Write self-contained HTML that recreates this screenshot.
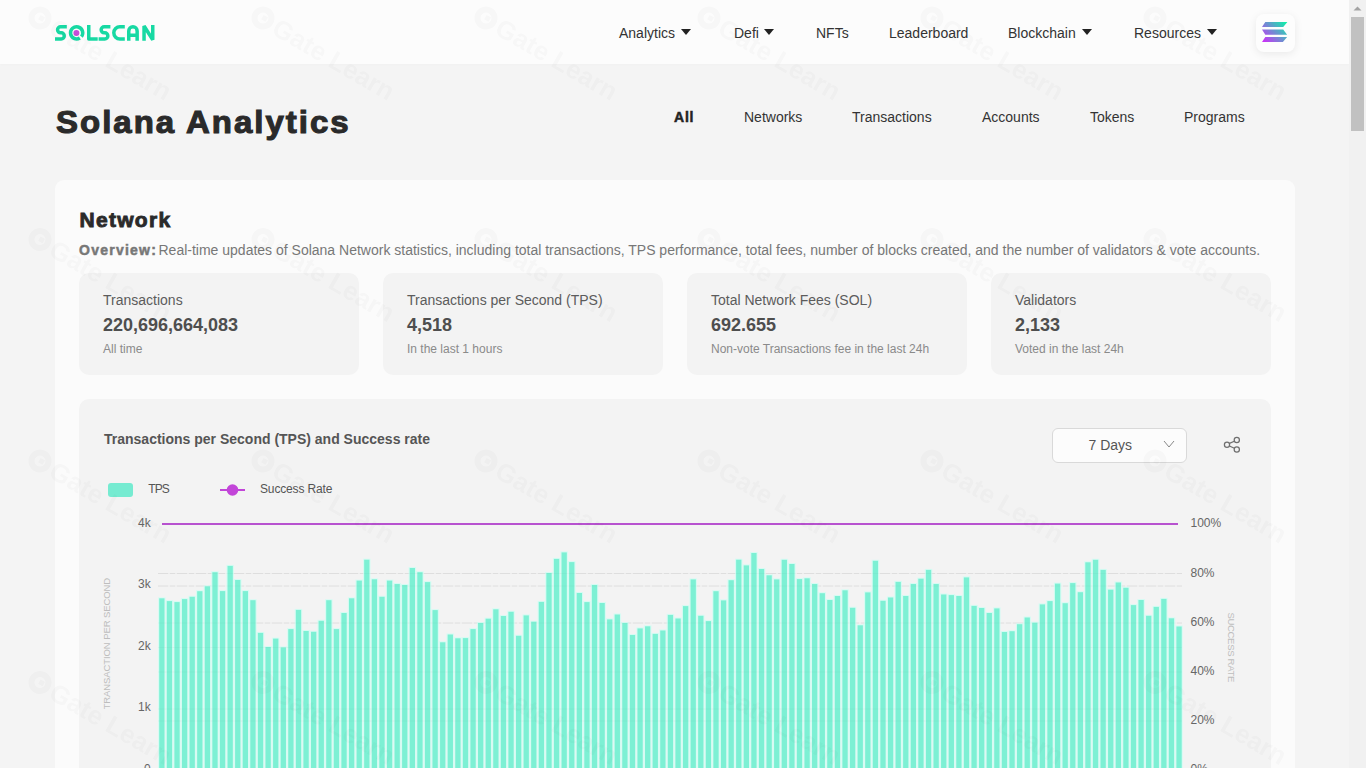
<!DOCTYPE html>
<html><head><meta charset="utf-8">
<style>
*{margin:0;padding:0;box-sizing:border-box}
html,body{width:1366px;height:768px;overflow:hidden}
body{background:#f4f4f4;font-family:"Liberation Sans",sans-serif;color:#333;position:relative}
.a{position:absolute;white-space:nowrap}
#hdr{position:absolute;left:0;top:0;width:1349px;height:64px;background:#fcfcfc;box-shadow:0 1px 2px rgba(0,0,0,0.015)}
.nav{font-size:14px;color:#333;top:25px;line-height:16px}
.caret{position:absolute;top:29px;width:0;height:0;border-left:5px solid transparent;border-right:5px solid transparent;border-top:6px solid #222}
.tab{font-size:14px;color:#333;top:109px;line-height:16px}
#card{position:absolute;left:55px;top:180px;width:1240px;height:700px;background:#fbfbfb;border-radius:9px}
.box{position:absolute;top:273px;width:280px;height:102px;background:#f3f3f3;border-radius:10px}
.lbl{font-size:14px;color:#5c5c5c;line-height:16px}
.val{font-size:18px;font-weight:bold;color:#4e4e4e;line-height:20px}
.sub{font-size:12px;color:#8a8a8a;line-height:14px}
#panel{position:absolute;left:79px;top:399px;width:1192px;height:500px;background:#f3f3f3;border-radius:10px}
#sb{position:absolute;left:1349px;top:0;width:17px;height:768px;background:#f1f1f1}
#thumb{position:absolute;left:1351px;top:17px;width:13px;height:114px;background:#c1c1c1}
</style></head><body>
<div id="hdr"></div>
<!-- logo -->
<svg class="a" style="left:0;top:0" width="170" height="64" viewBox="0 0 170 64">
<g fill="none" stroke="#17d9a3" stroke-width="3.5" stroke-linejoin="round">
<path d="M66.8 26.75H60.6A3.05 3.05 0 0 0 60.6 32.85H61.2A3.05 3.05 0 0 1 61.2 38.95H55"/>
<path d="M79.83 38.02A6.1 6.1 0 1 1 81.41 36.61"/>
<path d="M88.75 25V38.95H97.7"/>
<path d="M110.4 26.75H104.2A3.05 3.05 0 0 0 104.2 32.85H104.8A3.05 3.05 0 0 1 104.8 38.95H98.6"/>
<path d="M124.8 26.75H119.9A6.1 6.1 0 0 0 119.9 38.95H124.8"/>
<path d="M128.75 40.7V30.95A4.2 4.2 0 0 1 137.15 30.95V40.7M128.75 35.2H137.15"/>
<path d="M144.05 40.7V26L152.75 39.7V25" stroke-linejoin="miter" stroke-miterlimit="1.5"/>
</g>
<circle cx="76.4" cy="32.9" r="3" fill="#c74ed8"/>
</svg>

<div class="a nav" style="left:619px">Analytics</div><div class="caret" style="left:681px"></div>
<div class="a nav" style="left:734px">Defi</div><div class="caret" style="left:764px"></div>
<div class="a nav" style="left:816px">NFTs</div>
<div class="a nav" style="left:889px">Leaderboard</div>
<div class="a nav" style="left:1008px">Blockchain</div><div class="caret" style="left:1082px"></div>
<div class="a nav" style="left:1134px">Resources</div><div class="caret" style="left:1207px"></div>

<div class="a" style="left:1256px;top:14px;width:39px;height:38px;background:#fdfdfd;border-radius:8px;box-shadow:0 2px 8px rgba(0,0,0,0.08)"></div>
<svg class="a" style="left:0;top:0" width="1366" height="64" viewBox="0 0 1366 64">
<defs><linearGradient id="sg" x1="1287" y1="20" x2="1262" y2="44" gradientUnits="userSpaceOnUse"><stop offset="0" stop-color="#00ffa3"/><stop offset="1" stop-color="#dc1fff"/></linearGradient></defs>
<path fill="url(#sg)" d="M1265.3 22H1287.4L1283.2 27H1262Z M1262 29.5H1283.2L1287.1 34.7H1265.3Z M1265.3 37H1287.1L1282.9 42H1262Z"/>
</svg>

<div class="a" style="left:55.5px;top:101.5px;font-size:32px;font-weight:bold;color:#2a2a2a;letter-spacing:1.95px;line-height:40px;-webkit-text-stroke:1.1px #2a2a2a;transform:scaleX(1.03);transform-origin:0 0">Solana Analytics</div>

<div class="a tab" style="left:674px;font-weight:bold;color:#222;letter-spacing:0.8px;-webkit-text-stroke:0.5px #222">All</div>
<div class="a tab" style="left:744px">Networks</div>
<div class="a tab" style="left:852px">Transactions</div>
<div class="a tab" style="left:982px">Accounts</div>
<div class="a tab" style="left:1090px">Tokens</div>
<div class="a tab" style="left:1184px">Programs</div>

<div id="card"></div>
<div class="a" style="left:79.5px;top:207.8px;font-size:21px;font-weight:bold;color:#2a2a2a;letter-spacing:1.3px;line-height:24px;-webkit-text-stroke:0.9px #2a2a2a">Network</div>
<div class="a" style="left:79px;top:242px;font-size:14px;color:#777;line-height:16px"><b style="color:#777;letter-spacing:1.25px;-webkit-text-stroke:0.5px #777;margin-right:-2.6px">Overview:</b> Real-time updates of Solana Network statistics, including total transactions, TPS performance, total fees, number of blocks created, and the number of validators &amp; vote accounts.</div>

<div class="box" style="left:79px"></div>
<div class="box" style="left:383px"></div>
<div class="box" style="left:687px"></div>
<div class="box" style="left:991px"></div>

<div class="a lbl" style="left:103px;top:292px">Transactions</div>
<div class="a val" style="left:103px;top:315px">220,696,664,083</div>
<div class="a sub" style="left:103px;top:342px">All time</div>
<div class="a lbl" style="left:407px;top:292px">Transactions per Second (TPS)</div>
<div class="a val" style="left:407px;top:315px">4,518</div>
<div class="a sub" style="left:407px;top:342px">In the last 1 hours</div>
<div class="a lbl" style="left:711px;top:292px">Total Network Fees (SOL)</div>
<div class="a val" style="left:711px;top:315px">692.655</div>
<div class="a sub" style="left:711px;top:342px">Non-vote Transactions fee in the last 24h</div>
<div class="a lbl" style="left:1015px;top:292px">Validators</div>
<div class="a val" style="left:1015px;top:315px">2,133</div>
<div class="a sub" style="left:1015px;top:342px">Voted in the last 24h</div>

<div id="panel"></div>
<div class="a" style="left:104px;top:430.8px;font-size:14px;font-weight:bold;color:#555;line-height:16px">Transactions per Second (TPS) and Success rate</div>

<div class="a" style="left:1052px;top:428px;width:135px;height:35px;background:#fcfcfc;border:1px solid #d9d9d9;border-radius:6px"></div>
<div class="a" style="left:1088.5px;top:437px;font-size:14px;color:#555;line-height:16px">7 Days</div>

<svg class="a" style="left:0;top:0" width="1366" height="768" viewBox="0 0 1366 768">
<path d="M1164 441L1169 447L1174 441" fill="none" stroke="#888" stroke-width="1"/>
<g fill="none" stroke="#6f6f6f" stroke-width="1.25"><circle cx="1227" cy="444.7" r="2.6"/><circle cx="1236.8" cy="440" r="2.6"/><circle cx="1236.8" cy="449.5" r="2.6"/><path d="M1229.4 443.4L1234.4 441.2M1229.4 446L1234.4 448.3"/></g>
<rect x="108" y="483" width="25" height="14" rx="3" fill="#76ebd1"/>
<text x="148.3" y="492.9" font-size="12" fill="#555" letter-spacing="-0.9" font-family="Liberation Sans">TPS</text>
<line x1="220" x2="245" y1="490" y2="490" stroke="#c245d8" stroke-width="2"/>
<circle cx="232.5" cy="490" r="5.8" fill="#c245d8"/>
<text x="260" y="492.9" font-size="12" fill="#555" letter-spacing="-0.15" font-family="Liberation Sans">Success Rate</text>
<g stroke="#e4e4e4" stroke-width="1" stroke-dasharray="10 2 5 2">
<line x1="158" x2="1182" y1="586" y2="586"/>
<line x1="158" x2="1182" y1="647.5" y2="647.5"/>
<line x1="158" x2="1182" y1="709" y2="709"/>
<line x1="158" x2="1182" y1="573.5" y2="573.5"/>
<line x1="158" x2="1182" y1="623" y2="623"/>
<line x1="158" x2="1182" y1="672" y2="672"/>
<line x1="158" x2="1182" y1="721" y2="721"/>
</g>
<g fill="#d6fbf3">
<rect x="158.10" y="597.3" width="7.5" height="172.7"/>
<rect x="165.69" y="600.1" width="7.5" height="169.9"/>
<rect x="173.28" y="601.1" width="7.5" height="168.9"/>
<rect x="180.87" y="598.1" width="7.5" height="171.9"/>
<rect x="188.46" y="595.8" width="7.5" height="174.2"/>
<rect x="196.06" y="590.2" width="7.5" height="179.8"/>
<rect x="203.65" y="585.3" width="7.5" height="184.7"/>
<rect x="211.24" y="571.2" width="7.5" height="198.8"/>
<rect x="218.83" y="590.1" width="7.5" height="179.9"/>
<rect x="226.42" y="564.9" width="7.5" height="205.1"/>
<rect x="234.01" y="579.0" width="7.5" height="191.0"/>
<rect x="241.60" y="590.1" width="7.5" height="179.9"/>
<rect x="249.19" y="599.2" width="7.5" height="170.8"/>
<rect x="256.78" y="631.9" width="7.5" height="138.1"/>
<rect x="264.37" y="646.0" width="7.5" height="124.0"/>
<rect x="271.97" y="637.6" width="7.5" height="132.4"/>
<rect x="279.56" y="646.4" width="7.5" height="123.6"/>
<rect x="287.15" y="628.1" width="7.5" height="141.9"/>
<rect x="294.74" y="608.9" width="7.5" height="161.1"/>
<rect x="302.33" y="630.0" width="7.5" height="140.0"/>
<rect x="309.92" y="630.8" width="7.5" height="139.2"/>
<rect x="317.51" y="619.8" width="7.5" height="150.2"/>
<rect x="325.10" y="599.2" width="7.5" height="170.8"/>
<rect x="332.69" y="628.1" width="7.5" height="141.9"/>
<rect x="340.29" y="612.0" width="7.5" height="158.0"/>
<rect x="347.88" y="597.3" width="7.5" height="172.7"/>
<rect x="355.47" y="579.6" width="7.5" height="190.4"/>
<rect x="363.06" y="558.7" width="7.5" height="211.3"/>
<rect x="370.65" y="578.3" width="7.5" height="191.7"/>
<rect x="378.24" y="595.8" width="7.5" height="174.2"/>
<rect x="385.83" y="579.6" width="7.5" height="190.4"/>
<rect x="393.42" y="583.0" width="7.5" height="187.0"/>
<rect x="401.01" y="584.0" width="7.5" height="186.0"/>
<rect x="408.60" y="567.0" width="7.5" height="203.0"/>
<rect x="416.20" y="571.2" width="7.5" height="198.8"/>
<rect x="423.79" y="581.1" width="7.5" height="188.9"/>
<rect x="431.38" y="609.1" width="7.5" height="160.9"/>
<rect x="438.97" y="641.3" width="7.5" height="128.7"/>
<rect x="446.56" y="633.5" width="7.5" height="136.5"/>
<rect x="454.15" y="637.3" width="7.5" height="132.7"/>
<rect x="461.74" y="637.1" width="7.5" height="132.9"/>
<rect x="469.33" y="628.1" width="7.5" height="141.9"/>
<rect x="476.92" y="622.0" width="7.5" height="148.0"/>
<rect x="484.51" y="617.7" width="7.5" height="152.3"/>
<rect x="492.11" y="608.3" width="7.5" height="161.7"/>
<rect x="499.70" y="615.0" width="7.5" height="155.0"/>
<rect x="507.29" y="610.8" width="7.5" height="159.2"/>
<rect x="514.88" y="634.8" width="7.5" height="135.2"/>
<rect x="522.47" y="614.4" width="7.5" height="155.6"/>
<rect x="530.06" y="620.7" width="7.5" height="149.3"/>
<rect x="537.65" y="600.9" width="7.5" height="169.1"/>
<rect x="545.24" y="572.0" width="7.5" height="198.0"/>
<rect x="552.83" y="557.9" width="7.5" height="212.1"/>
<rect x="560.43" y="551.4" width="7.5" height="218.6"/>
<rect x="568.02" y="561.1" width="7.5" height="208.9"/>
<rect x="575.61" y="592.0" width="7.5" height="178.0"/>
<rect x="583.20" y="601.1" width="7.5" height="168.9"/>
<rect x="590.79" y="584.0" width="7.5" height="186.0"/>
<rect x="598.38" y="602.0" width="7.5" height="168.0"/>
<rect x="605.97" y="618.4" width="7.5" height="151.6"/>
<rect x="613.56" y="613.5" width="7.5" height="156.5"/>
<rect x="621.15" y="622.0" width="7.5" height="148.0"/>
<rect x="628.74" y="634.0" width="7.5" height="136.0"/>
<rect x="636.34" y="627.4" width="7.5" height="142.6"/>
<rect x="643.93" y="625.3" width="7.5" height="144.7"/>
<rect x="651.52" y="632.9" width="7.5" height="137.1"/>
<rect x="659.11" y="629.5" width="7.5" height="140.5"/>
<rect x="666.70" y="613.9" width="7.5" height="156.1"/>
<rect x="674.29" y="617.5" width="7.5" height="152.5"/>
<rect x="681.88" y="605.1" width="7.5" height="164.9"/>
<rect x="689.47" y="578.4" width="7.5" height="191.6"/>
<rect x="697.06" y="614.8" width="7.5" height="155.2"/>
<rect x="704.66" y="620.1" width="7.5" height="149.9"/>
<rect x="712.25" y="590.2" width="7.5" height="179.8"/>
<rect x="719.84" y="599.4" width="7.5" height="170.6"/>
<rect x="727.43" y="579.2" width="7.5" height="190.8"/>
<rect x="735.02" y="558.7" width="7.5" height="211.3"/>
<rect x="742.61" y="564.4" width="7.5" height="205.6"/>
<rect x="750.20" y="552.0" width="7.5" height="218.0"/>
<rect x="757.79" y="568.0" width="7.5" height="202.0"/>
<rect x="765.38" y="574.3" width="7.5" height="195.7"/>
<rect x="772.97" y="578.4" width="7.5" height="191.6"/>
<rect x="780.57" y="558.8" width="7.5" height="211.2"/>
<rect x="788.16" y="563.0" width="7.5" height="207.0"/>
<rect x="795.75" y="578.1" width="7.5" height="191.9"/>
<rect x="803.34" y="577.3" width="7.5" height="192.7"/>
<rect x="810.93" y="583.0" width="7.5" height="187.0"/>
<rect x="818.52" y="592.2" width="7.5" height="177.8"/>
<rect x="826.11" y="599.0" width="7.5" height="171.0"/>
<rect x="833.70" y="595.0" width="7.5" height="175.0"/>
<rect x="841.29" y="589.3" width="7.5" height="180.7"/>
<rect x="848.89" y="606.8" width="7.5" height="163.2"/>
<rect x="856.48" y="624.3" width="7.5" height="145.7"/>
<rect x="864.07" y="591.4" width="7.5" height="178.6"/>
<rect x="871.66" y="559.8" width="7.5" height="210.2"/>
<rect x="879.25" y="599.8" width="7.5" height="170.2"/>
<rect x="886.84" y="596.5" width="7.5" height="173.5"/>
<rect x="894.43" y="580.9" width="7.5" height="189.1"/>
<rect x="902.02" y="595.0" width="7.5" height="175.0"/>
<rect x="909.61" y="583.0" width="7.5" height="187.0"/>
<rect x="917.20" y="577.7" width="7.5" height="192.3"/>
<rect x="924.80" y="568.9" width="7.5" height="201.1"/>
<rect x="932.39" y="583.0" width="7.5" height="187.0"/>
<rect x="939.98" y="593.5" width="7.5" height="176.5"/>
<rect x="947.57" y="594.1" width="7.5" height="175.9"/>
<rect x="955.16" y="595.0" width="7.5" height="175.0"/>
<rect x="962.75" y="576.4" width="7.5" height="193.6"/>
<rect x="970.34" y="604.9" width="7.5" height="165.1"/>
<rect x="977.93" y="607.0" width="7.5" height="163.0"/>
<rect x="985.52" y="612.0" width="7.5" height="158.0"/>
<rect x="993.11" y="607.4" width="7.5" height="162.6"/>
<rect x="1000.71" y="631.0" width="7.5" height="139.0"/>
<rect x="1008.30" y="630.2" width="7.5" height="139.8"/>
<rect x="1015.89" y="623.2" width="7.5" height="146.8"/>
<rect x="1023.48" y="616.5" width="7.5" height="153.5"/>
<rect x="1031.07" y="621.7" width="7.5" height="148.3"/>
<rect x="1038.66" y="603.4" width="7.5" height="166.6"/>
<rect x="1046.25" y="600.1" width="7.5" height="169.9"/>
<rect x="1053.84" y="582.6" width="7.5" height="187.4"/>
<rect x="1061.43" y="602.2" width="7.5" height="167.8"/>
<rect x="1069.03" y="582.1" width="7.5" height="187.9"/>
<rect x="1076.62" y="591.2" width="7.5" height="178.8"/>
<rect x="1084.21" y="561.3" width="7.5" height="208.7"/>
<rect x="1091.80" y="558.8" width="7.5" height="211.2"/>
<rect x="1099.39" y="568.9" width="7.5" height="201.1"/>
<rect x="1106.98" y="588.7" width="7.5" height="181.3"/>
<rect x="1114.57" y="581.5" width="7.5" height="188.5"/>
<rect x="1122.16" y="586.8" width="7.5" height="183.2"/>
<rect x="1129.75" y="604.1" width="7.5" height="165.9"/>
<rect x="1137.34" y="599.0" width="7.5" height="171.0"/>
<rect x="1144.94" y="614.8" width="7.5" height="155.2"/>
<rect x="1152.53" y="605.9" width="7.5" height="164.1"/>
<rect x="1160.12" y="597.9" width="7.5" height="172.1"/>
<rect x="1167.71" y="617.3" width="7.5" height="152.7"/>
<rect x="1175.30" y="625.5" width="7.5" height="144.5"/>
</g>
<g fill="#7df0d4">
<rect x="159.20" y="598.3" width="5.3" height="171.7"/>
<rect x="166.79" y="601.1" width="5.3" height="168.9"/>
<rect x="174.38" y="602.1" width="5.3" height="167.9"/>
<rect x="181.97" y="599.1" width="5.3" height="170.9"/>
<rect x="189.56" y="596.8" width="5.3" height="173.2"/>
<rect x="197.16" y="591.2" width="5.3" height="178.8"/>
<rect x="204.75" y="586.3" width="5.3" height="183.7"/>
<rect x="212.34" y="572.2" width="5.3" height="197.8"/>
<rect x="219.93" y="591.1" width="5.3" height="178.9"/>
<rect x="227.52" y="565.9" width="5.3" height="204.1"/>
<rect x="235.11" y="580.0" width="5.3" height="190.0"/>
<rect x="242.70" y="591.1" width="5.3" height="178.9"/>
<rect x="250.29" y="600.2" width="5.3" height="169.8"/>
<rect x="257.88" y="632.9" width="5.3" height="137.1"/>
<rect x="265.47" y="647.0" width="5.3" height="123.0"/>
<rect x="273.07" y="638.6" width="5.3" height="131.4"/>
<rect x="280.66" y="647.4" width="5.3" height="122.6"/>
<rect x="288.25" y="629.1" width="5.3" height="140.9"/>
<rect x="295.84" y="609.9" width="5.3" height="160.1"/>
<rect x="303.43" y="631.0" width="5.3" height="139.0"/>
<rect x="311.02" y="631.8" width="5.3" height="138.2"/>
<rect x="318.61" y="620.8" width="5.3" height="149.2"/>
<rect x="326.20" y="600.2" width="5.3" height="169.8"/>
<rect x="333.79" y="629.1" width="5.3" height="140.9"/>
<rect x="341.39" y="613.0" width="5.3" height="157.0"/>
<rect x="348.98" y="598.3" width="5.3" height="171.7"/>
<rect x="356.57" y="580.6" width="5.3" height="189.4"/>
<rect x="364.16" y="559.7" width="5.3" height="210.3"/>
<rect x="371.75" y="579.3" width="5.3" height="190.7"/>
<rect x="379.34" y="596.8" width="5.3" height="173.2"/>
<rect x="386.93" y="580.6" width="5.3" height="189.4"/>
<rect x="394.52" y="584.0" width="5.3" height="186.0"/>
<rect x="402.11" y="585.0" width="5.3" height="185.0"/>
<rect x="409.70" y="568.0" width="5.3" height="202.0"/>
<rect x="417.30" y="572.2" width="5.3" height="197.8"/>
<rect x="424.89" y="582.1" width="5.3" height="187.9"/>
<rect x="432.48" y="610.1" width="5.3" height="159.9"/>
<rect x="440.07" y="642.3" width="5.3" height="127.7"/>
<rect x="447.66" y="634.5" width="5.3" height="135.5"/>
<rect x="455.25" y="638.3" width="5.3" height="131.7"/>
<rect x="462.84" y="638.1" width="5.3" height="131.9"/>
<rect x="470.43" y="629.1" width="5.3" height="140.9"/>
<rect x="478.02" y="623.0" width="5.3" height="147.0"/>
<rect x="485.61" y="618.7" width="5.3" height="151.3"/>
<rect x="493.21" y="609.3" width="5.3" height="160.7"/>
<rect x="500.80" y="616.0" width="5.3" height="154.0"/>
<rect x="508.39" y="611.8" width="5.3" height="158.2"/>
<rect x="515.98" y="635.8" width="5.3" height="134.2"/>
<rect x="523.57" y="615.4" width="5.3" height="154.6"/>
<rect x="531.16" y="621.7" width="5.3" height="148.3"/>
<rect x="538.75" y="601.9" width="5.3" height="168.1"/>
<rect x="546.34" y="573.0" width="5.3" height="197.0"/>
<rect x="553.93" y="558.9" width="5.3" height="211.1"/>
<rect x="561.53" y="552.4" width="5.3" height="217.6"/>
<rect x="569.12" y="562.1" width="5.3" height="207.9"/>
<rect x="576.71" y="593.0" width="5.3" height="177.0"/>
<rect x="584.30" y="602.1" width="5.3" height="167.9"/>
<rect x="591.89" y="585.0" width="5.3" height="185.0"/>
<rect x="599.48" y="603.0" width="5.3" height="167.0"/>
<rect x="607.07" y="619.4" width="5.3" height="150.6"/>
<rect x="614.66" y="614.5" width="5.3" height="155.5"/>
<rect x="622.25" y="623.0" width="5.3" height="147.0"/>
<rect x="629.84" y="635.0" width="5.3" height="135.0"/>
<rect x="637.44" y="628.4" width="5.3" height="141.6"/>
<rect x="645.03" y="626.3" width="5.3" height="143.7"/>
<rect x="652.62" y="633.9" width="5.3" height="136.1"/>
<rect x="660.21" y="630.5" width="5.3" height="139.5"/>
<rect x="667.80" y="614.9" width="5.3" height="155.1"/>
<rect x="675.39" y="618.5" width="5.3" height="151.5"/>
<rect x="682.98" y="606.1" width="5.3" height="163.9"/>
<rect x="690.57" y="579.4" width="5.3" height="190.6"/>
<rect x="698.16" y="615.8" width="5.3" height="154.2"/>
<rect x="705.76" y="621.1" width="5.3" height="148.9"/>
<rect x="713.35" y="591.2" width="5.3" height="178.8"/>
<rect x="720.94" y="600.4" width="5.3" height="169.6"/>
<rect x="728.53" y="580.2" width="5.3" height="189.8"/>
<rect x="736.12" y="559.7" width="5.3" height="210.3"/>
<rect x="743.71" y="565.4" width="5.3" height="204.6"/>
<rect x="751.30" y="553.0" width="5.3" height="217.0"/>
<rect x="758.89" y="569.0" width="5.3" height="201.0"/>
<rect x="766.48" y="575.3" width="5.3" height="194.7"/>
<rect x="774.07" y="579.4" width="5.3" height="190.6"/>
<rect x="781.67" y="559.8" width="5.3" height="210.2"/>
<rect x="789.26" y="564.0" width="5.3" height="206.0"/>
<rect x="796.85" y="579.1" width="5.3" height="190.9"/>
<rect x="804.44" y="578.3" width="5.3" height="191.7"/>
<rect x="812.03" y="584.0" width="5.3" height="186.0"/>
<rect x="819.62" y="593.2" width="5.3" height="176.8"/>
<rect x="827.21" y="600.0" width="5.3" height="170.0"/>
<rect x="834.80" y="596.0" width="5.3" height="174.0"/>
<rect x="842.39" y="590.3" width="5.3" height="179.7"/>
<rect x="849.99" y="607.8" width="5.3" height="162.2"/>
<rect x="857.58" y="625.3" width="5.3" height="144.7"/>
<rect x="865.17" y="592.4" width="5.3" height="177.6"/>
<rect x="872.76" y="560.8" width="5.3" height="209.2"/>
<rect x="880.35" y="600.8" width="5.3" height="169.2"/>
<rect x="887.94" y="597.5" width="5.3" height="172.5"/>
<rect x="895.53" y="581.9" width="5.3" height="188.1"/>
<rect x="903.12" y="596.0" width="5.3" height="174.0"/>
<rect x="910.71" y="584.0" width="5.3" height="186.0"/>
<rect x="918.30" y="578.7" width="5.3" height="191.3"/>
<rect x="925.90" y="569.9" width="5.3" height="200.1"/>
<rect x="933.49" y="584.0" width="5.3" height="186.0"/>
<rect x="941.08" y="594.5" width="5.3" height="175.5"/>
<rect x="948.67" y="595.1" width="5.3" height="174.9"/>
<rect x="956.26" y="596.0" width="5.3" height="174.0"/>
<rect x="963.85" y="577.4" width="5.3" height="192.6"/>
<rect x="971.44" y="605.9" width="5.3" height="164.1"/>
<rect x="979.03" y="608.0" width="5.3" height="162.0"/>
<rect x="986.62" y="613.0" width="5.3" height="157.0"/>
<rect x="994.21" y="608.4" width="5.3" height="161.6"/>
<rect x="1001.81" y="632.0" width="5.3" height="138.0"/>
<rect x="1009.40" y="631.2" width="5.3" height="138.8"/>
<rect x="1016.99" y="624.2" width="5.3" height="145.8"/>
<rect x="1024.58" y="617.5" width="5.3" height="152.5"/>
<rect x="1032.17" y="622.7" width="5.3" height="147.3"/>
<rect x="1039.76" y="604.4" width="5.3" height="165.6"/>
<rect x="1047.35" y="601.1" width="5.3" height="168.9"/>
<rect x="1054.94" y="583.6" width="5.3" height="186.4"/>
<rect x="1062.53" y="603.2" width="5.3" height="166.8"/>
<rect x="1070.13" y="583.1" width="5.3" height="186.9"/>
<rect x="1077.72" y="592.2" width="5.3" height="177.8"/>
<rect x="1085.31" y="562.3" width="5.3" height="207.7"/>
<rect x="1092.90" y="559.8" width="5.3" height="210.2"/>
<rect x="1100.49" y="569.9" width="5.3" height="200.1"/>
<rect x="1108.08" y="589.7" width="5.3" height="180.3"/>
<rect x="1115.67" y="582.5" width="5.3" height="187.5"/>
<rect x="1123.26" y="587.8" width="5.3" height="182.2"/>
<rect x="1130.85" y="605.1" width="5.3" height="164.9"/>
<rect x="1138.44" y="600.0" width="5.3" height="170.0"/>
<rect x="1146.04" y="615.8" width="5.3" height="154.2"/>
<rect x="1153.63" y="606.9" width="5.3" height="163.1"/>
<rect x="1161.22" y="598.9" width="5.3" height="171.1"/>
<rect x="1168.81" y="618.3" width="5.3" height="151.7"/>
<rect x="1176.40" y="626.5" width="5.3" height="143.5"/>
</g>
<g stroke="#000" stroke-opacity="0.025" stroke-width="1">
<line x1="158" x2="1182" y1="586" y2="586"/>
<line x1="158" x2="1182" y1="647.5" y2="647.5"/>
<line x1="158" x2="1182" y1="709" y2="709"/>
<line x1="158" x2="1182" y1="573.5" y2="573.5"/>
<line x1="158" x2="1182" y1="623" y2="623"/>
<line x1="158" x2="1182" y1="672" y2="672"/>
<line x1="158" x2="1182" y1="721" y2="721"/>
</g>
<line x1="162" x2="1178" y1="524" y2="524" stroke="#b752cf" stroke-width="2.2"/>
<g font-family="Liberation Sans" font-size="12" fill="#666">
<text x="150.8" y="526.6" text-anchor="end">4k</text><text x="150.8" y="588.2" text-anchor="end">3k</text><text x="150.8" y="649.8" text-anchor="end">2k</text><text x="150.8" y="711.3" text-anchor="end">1k</text><text x="150.8" y="772.9" text-anchor="end">0</text>
<text x="1190.5" y="526.7">100%</text><text x="1190.5" y="576.7">80%</text><text x="1190.5" y="625.8">60%</text><text x="1190.5" y="674.8">40%</text><text x="1190.5" y="723.9">20%</text><text x="1190.5" y="772.9">0%</text>
</g>
<text transform="translate(110.3,643.7) rotate(-90)" text-anchor="middle" font-family="Liberation Sans" font-size="9.5" letter-spacing="-0.1" fill="#bdbdbd">TRANSACTION PER SECOND</text>
<text transform="translate(1228.4,647.2) rotate(90)" text-anchor="middle" font-family="Liberation Sans" font-size="9.5" letter-spacing="-0.3" fill="#bdbdbd">SUCCESS RATE</text>
</svg>

<svg class="a" style="left:0;top:0" width="1366" height="768"><g fill="#000" opacity="0.022" font-family="Liberation Sans"><g transform="translate(40,18.0) rotate(30)"><circle r="8.5" fill="none" stroke-width="6" stroke="#000"/><rect x="-1" y="-3" width="5" height="5"/><text x="14" y="9.5" font-size="26" font-weight="bold">Gate Learn</text></g><g transform="translate(263,18.0) rotate(30)"><circle r="8.5" fill="none" stroke-width="6" stroke="#000"/><rect x="-1" y="-3" width="5" height="5"/><text x="14" y="9.5" font-size="26" font-weight="bold">Gate Learn</text></g><g transform="translate(486,18.0) rotate(30)"><circle r="8.5" fill="none" stroke-width="6" stroke="#000"/><rect x="-1" y="-3" width="5" height="5"/><text x="14" y="9.5" font-size="26" font-weight="bold">Gate Learn</text></g><g transform="translate(709,18.0) rotate(30)"><circle r="8.5" fill="none" stroke-width="6" stroke="#000"/><rect x="-1" y="-3" width="5" height="5"/><text x="14" y="9.5" font-size="26" font-weight="bold">Gate Learn</text></g><g transform="translate(932,18.0) rotate(30)"><circle r="8.5" fill="none" stroke-width="6" stroke="#000"/><rect x="-1" y="-3" width="5" height="5"/><text x="14" y="9.5" font-size="26" font-weight="bold">Gate Learn</text></g><g transform="translate(1155,18.0) rotate(30)"><circle r="8.5" fill="none" stroke-width="6" stroke="#000"/><rect x="-1" y="-3" width="5" height="5"/><text x="14" y="9.5" font-size="26" font-weight="bold">Gate Learn</text></g><g transform="translate(40,239.5) rotate(30)"><circle r="8.5" fill="none" stroke-width="6" stroke="#000"/><rect x="-1" y="-3" width="5" height="5"/><text x="14" y="9.5" font-size="26" font-weight="bold">Gate Learn</text></g><g transform="translate(263,239.5) rotate(30)"><circle r="8.5" fill="none" stroke-width="6" stroke="#000"/><rect x="-1" y="-3" width="5" height="5"/><text x="14" y="9.5" font-size="26" font-weight="bold">Gate Learn</text></g><g transform="translate(486,239.5) rotate(30)"><circle r="8.5" fill="none" stroke-width="6" stroke="#000"/><rect x="-1" y="-3" width="5" height="5"/><text x="14" y="9.5" font-size="26" font-weight="bold">Gate Learn</text></g><g transform="translate(709,239.5) rotate(30)"><circle r="8.5" fill="none" stroke-width="6" stroke="#000"/><rect x="-1" y="-3" width="5" height="5"/><text x="14" y="9.5" font-size="26" font-weight="bold">Gate Learn</text></g><g transform="translate(932,239.5) rotate(30)"><circle r="8.5" fill="none" stroke-width="6" stroke="#000"/><rect x="-1" y="-3" width="5" height="5"/><text x="14" y="9.5" font-size="26" font-weight="bold">Gate Learn</text></g><g transform="translate(1155,239.5) rotate(30)"><circle r="8.5" fill="none" stroke-width="6" stroke="#000"/><rect x="-1" y="-3" width="5" height="5"/><text x="14" y="9.5" font-size="26" font-weight="bold">Gate Learn</text></g><g transform="translate(40,461.0) rotate(30)"><circle r="8.5" fill="none" stroke-width="6" stroke="#000"/><rect x="-1" y="-3" width="5" height="5"/><text x="14" y="9.5" font-size="26" font-weight="bold">Gate Learn</text></g><g transform="translate(263,461.0) rotate(30)"><circle r="8.5" fill="none" stroke-width="6" stroke="#000"/><rect x="-1" y="-3" width="5" height="5"/><text x="14" y="9.5" font-size="26" font-weight="bold">Gate Learn</text></g><g transform="translate(486,461.0) rotate(30)"><circle r="8.5" fill="none" stroke-width="6" stroke="#000"/><rect x="-1" y="-3" width="5" height="5"/><text x="14" y="9.5" font-size="26" font-weight="bold">Gate Learn</text></g><g transform="translate(709,461.0) rotate(30)"><circle r="8.5" fill="none" stroke-width="6" stroke="#000"/><rect x="-1" y="-3" width="5" height="5"/><text x="14" y="9.5" font-size="26" font-weight="bold">Gate Learn</text></g><g transform="translate(932,461.0) rotate(30)"><circle r="8.5" fill="none" stroke-width="6" stroke="#000"/><rect x="-1" y="-3" width="5" height="5"/><text x="14" y="9.5" font-size="26" font-weight="bold">Gate Learn</text></g><g transform="translate(1155,461.0) rotate(30)"><circle r="8.5" fill="none" stroke-width="6" stroke="#000"/><rect x="-1" y="-3" width="5" height="5"/><text x="14" y="9.5" font-size="26" font-weight="bold">Gate Learn</text></g><g transform="translate(40,682.5) rotate(30)"><circle r="8.5" fill="none" stroke-width="6" stroke="#000"/><rect x="-1" y="-3" width="5" height="5"/><text x="14" y="9.5" font-size="26" font-weight="bold">Gate Learn</text></g><g transform="translate(263,682.5) rotate(30)"><circle r="8.5" fill="none" stroke-width="6" stroke="#000"/><rect x="-1" y="-3" width="5" height="5"/><text x="14" y="9.5" font-size="26" font-weight="bold">Gate Learn</text></g><g transform="translate(486,682.5) rotate(30)"><circle r="8.5" fill="none" stroke-width="6" stroke="#000"/><rect x="-1" y="-3" width="5" height="5"/><text x="14" y="9.5" font-size="26" font-weight="bold">Gate Learn</text></g><g transform="translate(709,682.5) rotate(30)"><circle r="8.5" fill="none" stroke-width="6" stroke="#000"/><rect x="-1" y="-3" width="5" height="5"/><text x="14" y="9.5" font-size="26" font-weight="bold">Gate Learn</text></g><g transform="translate(932,682.5) rotate(30)"><circle r="8.5" fill="none" stroke-width="6" stroke="#000"/><rect x="-1" y="-3" width="5" height="5"/><text x="14" y="9.5" font-size="26" font-weight="bold">Gate Learn</text></g><g transform="translate(1155,682.5) rotate(30)"><circle r="8.5" fill="none" stroke-width="6" stroke="#000"/><rect x="-1" y="-3" width="5" height="5"/><text x="14" y="9.5" font-size="26" font-weight="bold">Gate Learn</text></g></g></svg>
<div id="sb"></div>
<div id="thumb"></div>
<svg class="a" style="left:1349px;top:0" width="17" height="17"><path d="M4.5 10.5L8.5 6.5L12.5 10.5Z" fill="#a3a3a3"/></svg>
</body></html>
